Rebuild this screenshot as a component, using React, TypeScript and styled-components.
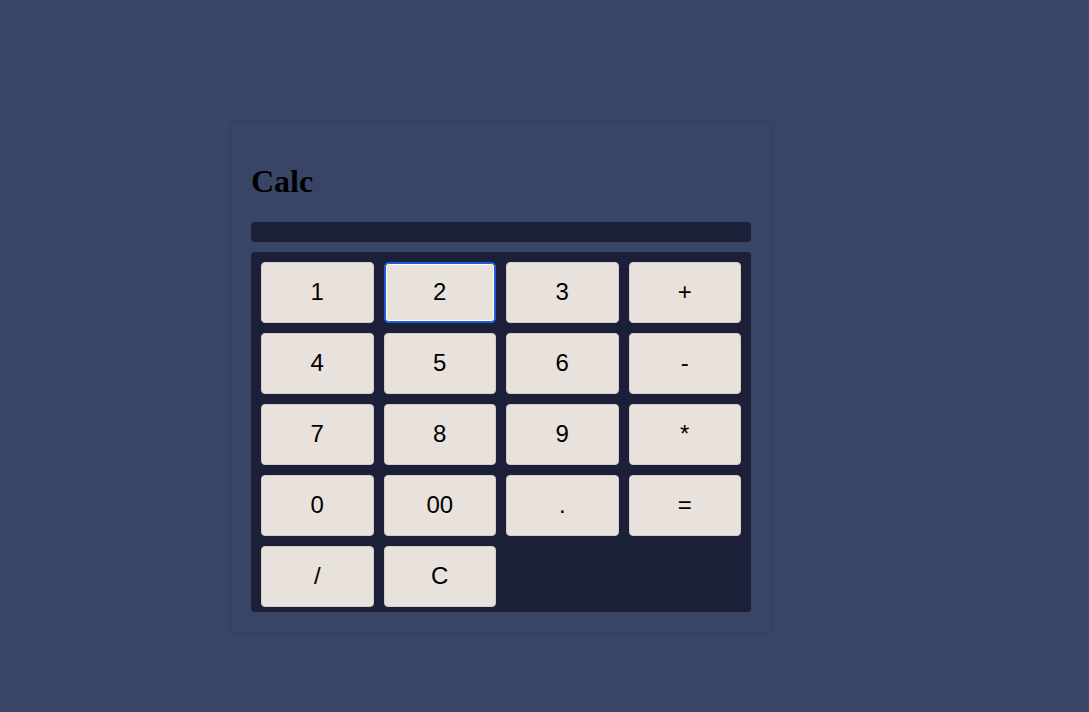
import React from "react";
import styled, { createGlobalStyle, css } from "styled-components";

const GlobalStyle = createGlobalStyle`
  html, body {
    margin: 0;
    background: #3a4668;
  }
  body {
    font-family: "Liberation Serif", "Times New Roman", serif;
  }
`;

const Page = styled.main`
  min-height: 712px;
  box-sizing: border-box;
  padding: 122px 0 0 231px;
`;

const Card = styled.section`
  width: 540px;
  box-sizing: border-box;
  padding: 20px;
  background: #394567;
  border-radius: 4px;
  box-shadow: 0 0 5px rgba(20, 26, 48, 0.25);
`;

const Title = styled.h1`
  margin: 0.67em 0;
  font-size: 32px;
  font-weight: bold;
  color: #000;
  line-height: 37px;
`;

const Display = styled.div`
  height: 20px;
  background: #1b1f38;
  border-radius: 4px;
  margin-bottom: 10px;
`;

const Keypad = styled.div`
  display: grid;
  grid-template-columns: repeat(4, 1fr);
  gap: 10px;
  padding: 10px 10px 5px;
  background: #1b1f38;
  border-radius: 4px;
`;

const Key = styled.button<{ $focused?: boolean }>`
  height: 61px;
  border: 1px solid #d3ccc7;
  border-radius: 4px;
  background: #e9e1dc;
  color: #000;
  font-family: "Liberation Sans", Arial, sans-serif;
  font-size: 24px;
  padding: 0;
  cursor: pointer;

  ${(p) =>
    p.$focused &&
    css`
      border-color: #1a5fd3;
      border-radius: 5px;
      box-shadow: inset 0 0 0 1px #1a5fd3, inset 0 0 0 2px #ffffff;
    `}
`;

const keys = ["1", "2", "3", "+", "4", "5", "6", "-", "7", "8", "9", "*", "0", "00", ".", "=", "/", "C"];

export default function App() {
  return (
    <Page>
      <GlobalStyle />
      <Card>
        <Title>Calc</Title>
        <Display />
        <Keypad>
          {keys.map((k) => (
            <Key key={k} $focused={k === "2"}>
              {k}
            </Key>
          ))}
        </Keypad>
      </Card>
    </Page>
  );
}
